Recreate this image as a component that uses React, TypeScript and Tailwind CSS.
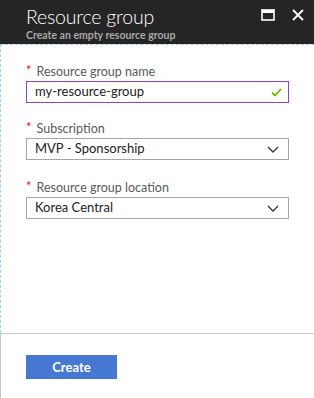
import React from "react";

function FieldLabel({ text }: { text: string }) {
  return (
    <div className="flex items-start h-[18px] text-[12.5px] leading-[18px] text-[#595959]">
      <span className="text-[#e81123] text-[13px] leading-[13px] mr-[5px] mt-[1px]">*</span>
      <span>{text}</span>
    </div>
  );
}

function Chevron() {
  return (
    <svg width="12" height="7" viewBox="0 0 12 7" className="shrink-0">
      <path d="M1 1 L6 6 L11 1" fill="none" stroke="#333" strokeWidth="1.3" />
    </svg>
  );
}

function SelectBox({ value }: { value: string }) {
  return (
    <div className="flex items-center justify-between h-[22px] border border-[#a6a6a6] pl-[8px] pr-[9px] text-[13px] text-[#222]">
      <span>{value}</span>
      <Chevron />
    </div>
  );
}

export default function App() {
  return (
    <div
      className="w-[314px] h-[398px] flex flex-col bg-white overflow-hidden"
      style={{ fontFamily: 'Lato, "Noto Sans", sans-serif' }}
    >
      {/* Header */}
      <div className="h-[44px] bg-[#252525] flex items-start pl-[26px] pr-[10px] shrink-0">
        <div className="flex-1 pt-[5px]">
          <div className="text-[19.5px] leading-[24px] font-light text-white tracking-[-0.2px]">
            Resource group
          </div>
          <div className="text-[10.5px] leading-[13px] font-bold text-[#a8a8a8]">
            Create an empty resource group
          </div>
        </div>
        <div className="flex items-center gap-[17px] pt-[9px]">
          <svg width="14" height="12" viewBox="0 0 14 12">
            <rect x="1" y="1" width="12" height="10" fill="none" stroke="white" strokeWidth="1.6" />
            <rect x="1" y="1" width="12" height="3" fill="white" />
          </svg>
          <svg width="12" height="12" viewBox="0 0 12 12">
            <path d="M1 1 L11 11 M11 1 L1 11" stroke="white" strokeWidth="1.8" />
          </svg>
        </div>
      </div>

      {/* Body */}
      <div className="flex-1 border-t border-l border-dashed border-[#9fd0f2] pl-[25px] pr-[25px] pt-[18px] flex flex-col">
        <FieldLabel text="Resource group name" />
        <div className="flex items-center justify-between h-[22px] border border-[#8e44c2] pl-[8px] pr-[6px] text-[13px] text-[#222]">
          <span>my-resource-group</span>
          <svg width="11" height="9" viewBox="0 0 11 9">
            <path d="M1 4.5 L4 7.5 L10 1" fill="none" stroke="#6bb700" strokeWidth="1.8" />
          </svg>
        </div>

        <div className="mt-[17px]">
          <FieldLabel text="Subscription" />
          <SelectBox value="MVP - Sponsorship" />
        </div>

        <div className="mt-[19px]">
          <FieldLabel text="Resource group location" />
          <SelectBox value="Korea Central" />
        </div>
      </div>

      {/* Footer */}
      <div className="h-[65px] shrink-0 border-t border-l border-[#c8c8c8] pl-[25px] pt-[20px]">
        <button className="w-[91px] h-[24px] bg-[#4678d2] text-white text-[13px] font-bold leading-[24px]">
          Create
        </button>
      </div>
    </div>
  );
}
